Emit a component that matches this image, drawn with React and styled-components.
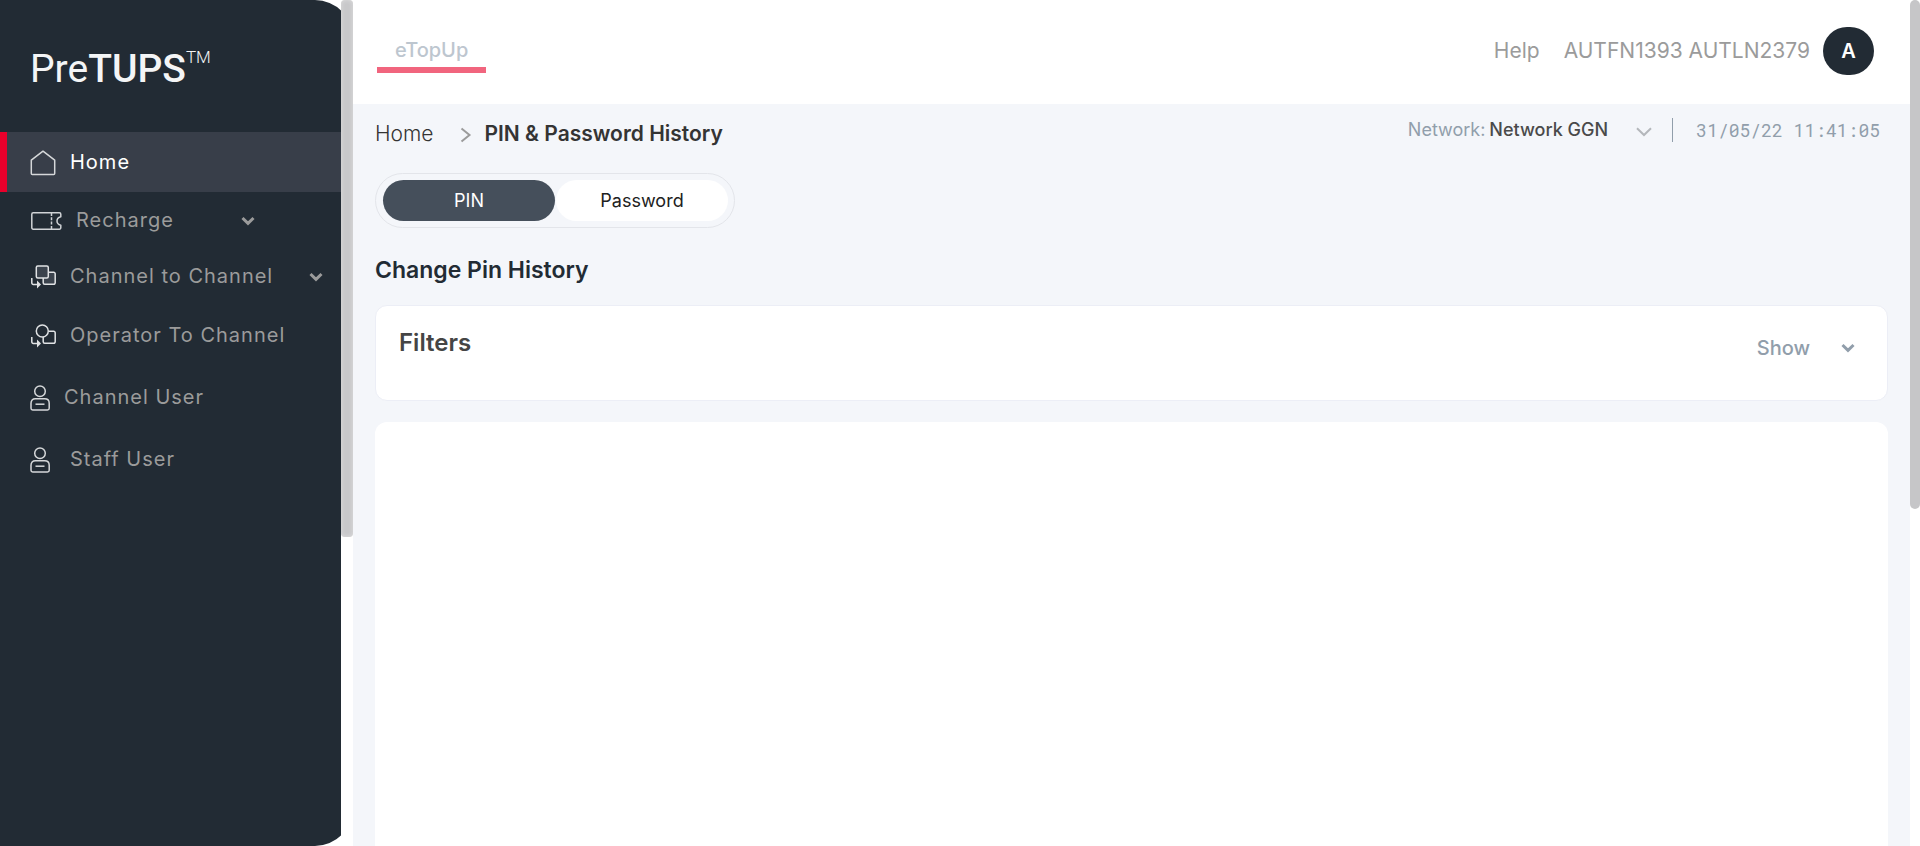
import React, { useState } from "react";
import styled, { createGlobalStyle } from "styled-components";

const GlobalStyle = createGlobalStyle`
  *, *::before, *::after { box-sizing: border-box; }
  body {
    margin: 0;
    background: #ffffff;
    font-family: Inter, "Liberation Sans", sans-serif;
  }
  button, select { font-family: inherit; }
  h1, h2, p { margin: 0; }
`;

const Shell = styled.div`
  display: flex;
  height: 100vh;
  overflow: hidden;
`;

const Sidebar = styled.aside`
  position: relative;
  flex: 0 0 353px;
`;

const SidebarPanel = styled.div`
  height: 100%;
  overflow: hidden;
  background: #222b34;
  border-radius: 0 38px 38px 0;
`;

const SidebarTrack = styled.div`
  position: absolute;
  top: 0;
  right: 0;
  bottom: 0;
  width: 12px;
  background: #ffffff;
`;

const SidebarThumb = styled.div`
  height: 537px;
  background: #c8c8ca;
  border-radius: 4px;
  box-shadow: inset 0 0 4px #dedede;
`;

const Logo = styled.div`
  display: flex;
  align-items: flex-start;
  height: 132px;
  padding: 45px 0 0 30px;
  color: #f4f5f6;
  font-family: Roboto, sans-serif;
  font-size: 39px;
  line-height: 48px;
  font-weight: 400;

  strong { font-weight: 500; }
  sup { font-size: 17px; line-height: 24px; font-weight: 300; }
`;

const NavItem = styled.a`
  display: flex;
  align-items: center;
  gap: ${(p) => (p.$wide ? 20 : 14)}px;
  height: ${(p) => p.$height}px;
  padding-left: ${(p) => (p.$active ? 23 : 30)}px;
  border-left: ${(p) => (p.$active ? "7px solid #e9002b" : "0")};
  background: ${(p) => (p.$active ? "#383e49" : "transparent")};
  color: ${(p) => (p.$active ? "#ffffff" : "#9b9b9b")};
  font-size: 20px;
  line-height: 24px;
  letter-spacing: 1px;
  text-decoration: none;

  svg { flex: none; margin-top: 2px; }
`;

const NavArrow = styled.span`
  display: flex;
  margin-left: ${(p) => p.$space}px;
`;

const Content = styled.div`
  flex: 1;
  min-width: 0;
  display: flex;
  flex-direction: column;
`;

const Header = styled.header`
  flex: none;
  display: flex;
  align-items: center;
  justify-content: space-between;
  height: 104px;
  padding: 0 36px 2px 24px;
  background: #ffffff;
`;

const ProductTab = styled.a`
  padding: 9px 18px 5px;
  border-bottom: 6px solid #f1657e;
  color: #bdc6cf;
  font-size: 20px;
  line-height: 24px;
  font-weight: 500;
  text-decoration: none;
`;

const Account = styled.div`
  display: flex;
  align-items: center;
  color: #9b9b9b;
  font-size: 21px;
  line-height: 24px;
`;

const HelpLink = styled.a`
  margin-right: 24px;
  color: inherit;
  text-decoration: none;
`;

const Avatar = styled.button`
  width: 51px;
  height: 48px;
  margin-left: 13px;
  padding: 0;
  border: 0;
  border-radius: 24px;
  background: #222b34;
  color: #ffffff;
  font-size: 20px;
  font-weight: 600;
`;

const Main = styled.main`
  flex: 1;
  display: flex;
  flex-direction: column;
  min-height: 0;
  padding: 0 22px;
  background: #f4f6fa;
`;

const TopLine = styled.div`
  display: flex;
  align-items: flex-start;
  justify-content: space-between;
  padding: 12px 8px 0 0;
`;

const Breadcrumb = styled.nav`
  display: flex;
  align-items: center;
  padding-top: 6px;
  color: #343434;
  font-size: 21px;
  line-height: 24px;

  a { color: inherit; text-decoration: none; font-weight: 300; }
  svg { margin: 2px 13px 0 26px; }
  strong { font-weight: 600; }
`;

const Status = styled.div`
  display: flex;
  align-items: center;
  padding-top: 2px;
  color: #919eab;
  font-size: 18px;
  line-height: 24px;
`;

const NetworkField = styled.label`
  display: flex;
  align-items: center;
`;

const NetworkSelect = styled.select`
  appearance: none;
  margin: 0 0 0 4px;
  padding: 0;
  border: 0;
  background: transparent;
  color: #4a4a4a;
  font-size: 18px;
  line-height: 24px;
  font-weight: 500;
`;

const NetworkArrow = styled.span`
  display: flex;
  margin: 4px 20px 0 28px;
`;

const Clock = styled.time`
  margin-left: 23px;
  font-family: "Roboto Mono", "Liberation Mono", monospace;
  font-size: 18px;
`;

const Divider = styled.span`
  width: 1px;
  height: 24px;
  background: #919eab;
`;

const Toggle = styled.div`
  align-self: flex-start;
  display: flex;
  gap: 1px;
  margin-top: 27px;
  padding: 6px 6px 6px 7px;
  border: 1px solid #e3e5ea;
  border-radius: 28px;
`;

const ToggleButton = styled.button`
  width: 172px;
  height: 41px;
  padding: 0;
  border: 0;
  border-radius: 21px;
  background: ${(p) => (p.$active ? "#454f5b" : "#ffffff")};
  color: ${(p) => (p.$active ? "#ffffff" : "#212121")};
  font-size: 18px;
  line-height: 24px;
`;

const Title = styled.h1`
  margin-top: 28px;
  color: #222b34;
  font-size: 23px;
  line-height: 28px;
  font-weight: 600;
`;

const FilterCard = styled.section`
  flex: none;
  display: flex;
  align-items: flex-start;
  justify-content: space-between;
  height: 96px;
  margin-top: 21px;
  padding: 23px 32px 0 23px;
  border: 1px solid #eceef6;
  border-radius: 12px;
  background: #ffffff;
`;

const FilterTitle = styled.h2`
  color: #454545;
  font-size: 24px;
  line-height: 28px;
  font-weight: 600;
`;

const ShowButton = styled.button`
  display: flex;
  align-items: center;
  gap: 31px;
  margin-top: 7px;
  padding: 0;
  border: 0;
  background: transparent;
  color: #919eab;
  font-size: 20px;
  line-height: 24px;
  font-weight: 500;
`;

const ResultCard = styled.section`
  flex: 1;
  margin-top: 21px;
  border-radius: 12px 12px 0 0;
  background: #ffffff;
`;

const PageTrack = styled.div`
  flex: 0 0 10px;
  background: #ffffff;
`;

const PageThumb = styled.div`
  height: 509px;
  border-radius: 5px;
  background: #c6c6c8;
`;

const Chevron = ({ color = "#9b9b9b" }) => (
  <svg width="14" height="10" viewBox="0 0 14 10" fill="none" aria-hidden="true">
    <path d="M1.500 2 7 7.300 12.500 2" stroke={color} strokeWidth="3" />
  </svg>
);

const HomeIcon = () => (
  <svg width="26" height="26" viewBox="0 0 26 26" fill="none" stroke="#d6d8da" strokeWidth="1.500" aria-hidden="true">
    <path d="M1.300 10.200 13 1.200l11.700 9v13.300a1 1 0 0 1-1 1H2.300a1 1 0 0 1-1-1Z" strokeLinejoin="round" />
  </svg>
);

const TicketIcon = () => (
  <svg width="32" height="18" viewBox="-1 0 32 18" fill="none" stroke="#d0d3d6" strokeWidth="1.500" aria-hidden="true">
    <path d="M2.200.8h26.200a1.400 1.400 0 0 1 1.400 1.400v2.600C27.500 5.400 26 7 26 9s1.500 3.600 3.800 4.200v2.600a1.400 1.400 0 0 1-1.400 1.400H2.200A1.400 1.400 0 0 1 .8 15.800V2.200A1.400 1.400 0 0 1 2.200.8Z" strokeLinejoin="round" />
    <path d="M20.500 1v16" strokeDasharray="3 1.300" />
  </svg>
);

const TransferIcon = ({ round }) => (
  <svg width="26" height="24" viewBox="-1 0 26 24" fill="none" stroke="#e0e2e4" strokeWidth="1.500" aria-hidden="true">
    <path
      d="M18 7.300h4.700a1.500 1.500 0 0 1 1.500 1.500v9a1.500 1.500 0 0 1-1.500 1.500h-9a1.500 1.500 0 0 1-1.500-1.500V13"
      fill={round ? "none" : "#3b434d"}
    />
    {round ? (
      <circle cx="11.300" cy="7" r="6" fill="#222b34" />
    ) : (
      <rect x="5.300" y="1" width="12" height="12" rx="1.500" fill="#3b434d" />
    )}
    <path d="M.8 13v5a1.500 1.500 0 0 0 1.500 1.500H7" />
    <path d="M6 15.500l4 4-4 4Z" fill="#e0e2e4" stroke="none" />
  </svg>
);

const UserIcon = () => (
  <svg width="20" height="26" viewBox="0 0 20 26" fill="none" stroke="#d6d8da" strokeWidth="1.500" aria-hidden="true">
    <circle cx="10" cy="6.200" r="5.300" />
    <path d="M5.300 13.800h9.400c2.700 0 4.500 1.800 4.500 4.500v5a1.700 1.700 0 0 1-1.700 1.700H2.700A1.700 1.700 0 0 1 1 23.300v-5c0-2.700 1.600-4.500 4.300-4.500Z" />
    <path d="M5.500 19.200h9" />
  </svg>
);

const NAV = [
  { label: "Home", icon: <HomeIcon />, height: 60, active: true },
  { label: "Recharge", icon: <TicketIcon />, height: 56, arrow: 53 },
  { label: "Channel to Channel", icon: <TransferIcon />, height: 56, arrow: 22 },
  { label: "Operator To Channel", icon: <TransferIcon round />, height: 62 },
  { label: "Channel User", icon: <UserIcon />, height: 62 },
  { label: "Staff User", icon: <UserIcon />, height: 62, wide: true },
];

export default function App() {
  const [tab, setTab] = useState("PIN");

  return (
    <Shell>
      <GlobalStyle />
      <Sidebar>
        <SidebarPanel>
          <Logo>
            <span>Pre</span>
            <strong>TUPS</strong>
            <sup>TM</sup>
          </Logo>
          <nav>
            {NAV.map((item) => (
              <NavItem key={item.label} href="#" $active={item.active} $height={item.height} $wide={item.wide}>
                {item.icon}
                <span>{item.label}</span>
                {item.arrow && (
                  <NavArrow $space={item.arrow}>
                    <Chevron />
                  </NavArrow>
                )}
              </NavItem>
            ))}
          </nav>
        </SidebarPanel>
        <SidebarTrack>
          <SidebarThumb />
        </SidebarTrack>
      </Sidebar>

      <Content>
        <Header>
          <ProductTab href="#">eTopUp</ProductTab>
          <Account>
            <HelpLink href="#">Help</HelpLink>
            <span>AUTFN1393 AUTLN2379</span>
            <Avatar type="button">A</Avatar>
          </Account>
        </Header>

        <Main>
          <TopLine>
            <Breadcrumb>
              <a href="#">Home</a>
              <svg width="12" height="16" viewBox="0 0 12 16" fill="none" aria-hidden="true">
                <path d="M1.500 1.500 9.500 8l-8 6.500" stroke="#9b9b9b" strokeWidth="2" />
              </svg>
              <strong>PIN &amp; Password History</strong>
            </Breadcrumb>
            <Status>
              <NetworkField>
                Network:
                <NetworkSelect defaultValue="ggn">
                  <option value="ggn">Network GGN</option>
                </NetworkSelect>
              </NetworkField>
              <NetworkArrow>
                <svg width="16" height="10" viewBox="0 0 16 10" fill="none" aria-hidden="true">
                  <path d="M1 1.200 8 8l7-6.800" stroke="#b4b7bb" strokeWidth="2" />
                </svg>
              </NetworkArrow>
              <Divider />
              <Clock>31/05/22 11:41:05</Clock>
            </Status>
          </TopLine>

          <Toggle>
            {["PIN", "Password"].map((name) => (
              <ToggleButton key={name} type="button" $active={tab === name} onClick={() => setTab(name)}>
                {name}
              </ToggleButton>
            ))}
          </Toggle>

          <Title>Change Pin History</Title>

          <FilterCard>
            <FilterTitle>Filters</FilterTitle>
            <ShowButton type="button">
              Show
              <Chevron color="#919eab" />
            </ShowButton>
          </FilterCard>

          <ResultCard />
        </Main>
      </Content>

      <PageTrack>
        <PageThumb />
      </PageTrack>
    </Shell>
  );
}
